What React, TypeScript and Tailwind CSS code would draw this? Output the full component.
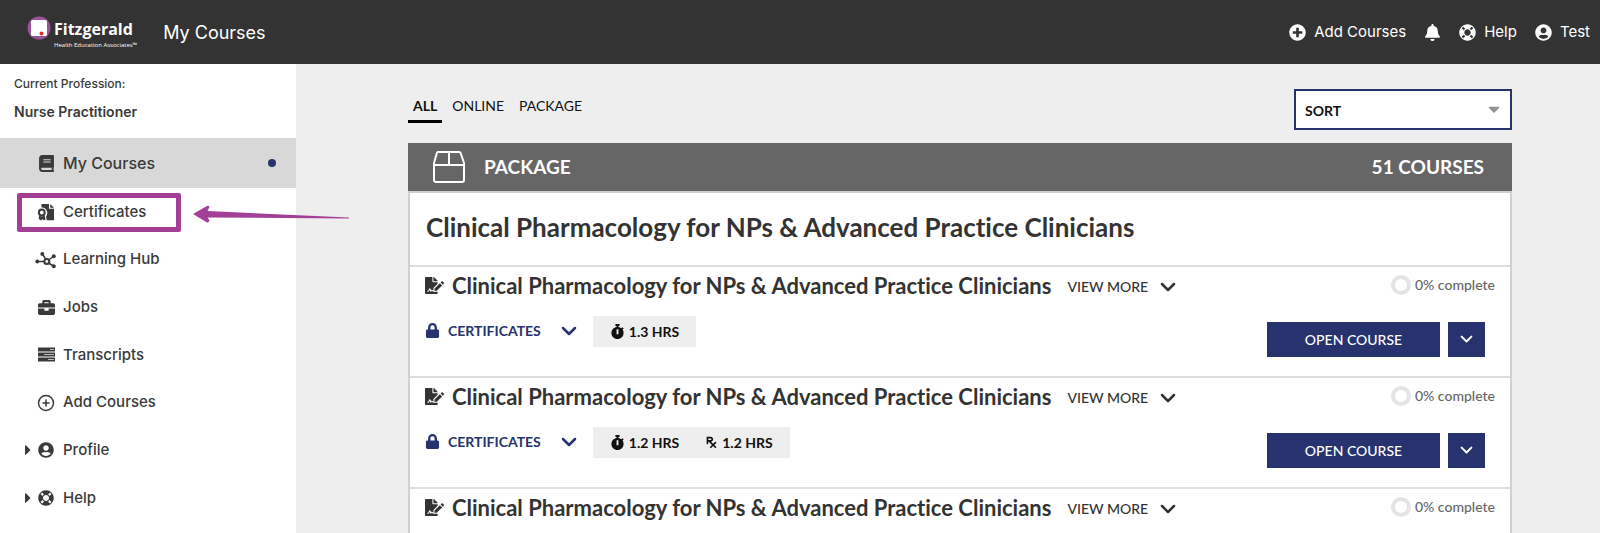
import { useState } from "react";
import type { ReactNode } from "react";
import {
  FaBell,
  FaBook,
  FaBriefcase,
  FaCaretDown,
  FaCaretRight,
  FaFileSignature,
  FaLifeRing,
  FaLock,
  FaPlusCircle,
  FaPrescription,
  FaStopwatch,
  FaUserCircle,
} from "react-icons/fa";
import { CirclePlus } from "lucide-react";

const COURSE_TITLE = "Clinical Pharmacology for NPs & Advanced Practice Clinicians";

const courses = [
  { id: 1, hours: "1.3 HRS", rx: "" },
  { id: 2, hours: "1.2 HRS", rx: "1.2 HRS" },
  { id: 3, hours: "1.2 HRS", rx: "1.2 HRS" },
];

function Chevron({ width }: { width: number }) {
  return (
    <svg
      viewBox="0 0 16 10"
      width={width}
      fill="none"
      stroke="currentColor"
      strokeWidth="2.500"
      strokeLinecap="round"
      strokeLinejoin="round"
    >
      <path d="M2 2l6 6 6-6" />
    </svg>
  );
}

function CertificateIcon() {
  return (
    <svg viewBox="0 0 18 18" className="h-[18px] w-[18px]" fill="currentColor">
      <path d="M4.500 1H12v4.800h5V17.200H9.800L9 13.500A5.400 5.400 0 0 0 4.500 4.600z" />
      <path d="M13.200 1L17 4.700h-3.800z" />
      <circle cx="4.800" cy="9.500" r="2.900" fill="none" stroke="currentColor" strokeWidth="2" />
      <path d="M2 12.800l3 .8 2.700-1.200.8 4.400-2 .4-1.200-1.200-1.300 1.500L1.800 16z" />
    </svg>
  );
}

function HubIcon() {
  return (
    <svg viewBox="0 0 22 18" className="h-[18px] w-[22px]" fill="currentColor">
      <path
        d="M3 10.500h6M7.500 3l3 5M13.500 9l5-3.500M13.500 12l5 3"
        fill="none"
        stroke="currentColor"
        strokeWidth="1.500"
      />
      <circle cx="11.800" cy="10.500" r="2.500" fill="none" stroke="currentColor" strokeWidth="2.100" />
      <circle cx="2.300" cy="10.500" r="1.900" />
      <circle cx="7.300" cy="3" r="2" />
      <circle cx="18.800" cy="5.200" r="2" />
      <circle cx="18.800" cy="15.200" r="2" />
    </svg>
  );
}

function TranscriptIcon() {
  return (
    <svg viewBox="0 0 17 15" className="h-[15px] w-[17px]">
      <path d="M0 .5h17v4H0zM0 5.500h17v4H0zM0 10.500h17v4H0z" fill="currentColor" />
      <path d="M12 2h4v1h-4zM6 7h10v1H6zM10 12h6v1h-6z" fill="#bbb" />
    </svg>
  );
}

function PackageIcon() {
  return (
    <svg
      viewBox="0 0 34 34"
      className="h-[34px] w-[34px]"
      fill="none"
      stroke="#fff"
      strokeWidth="2"
      strokeLinejoin="round"
    >
      <path d="M6 2h21a2 2 0 0 1 1.700 1.200L32 13v17a2 2 0 0 1-2 2H4a2 2 0 0 1-2-2V13L4.800 3.200A2 2 0 0 1 6 2zM2 15h30M17 2v13" />
    </svg>
  );
}

function Logo() {
  return (
    <div className="flex text-white">
      <svg viewBox="0 0 24 24" className="h-6 w-6">
        <circle cx="12" cy="12" r="11.500" fill="#9b5299" />
        <rect x="4" y="4" width="16" height="16" rx="1.500" fill="#fff" />
        <circle cx="14.500" cy="17.500" r="2" fill="#d6352f" />
      </svg>
      <div className="pt-px pl-[3px] font-['Open_Sans',sans-serif]">
        <p className="text-base leading-6 font-bold">Fitzgerald</p>
        <p className="text-[6px] leading-[8px] whitespace-nowrap">Health Education Associates™</p>
      </div>
    </div>
  );
}

function Header() {
  return (
    <header className="flex h-16 shrink-0 items-center justify-between bg-[#333] pt-px pr-[10px] pl-[27px] text-white">
      <div className="flex items-center">
        <Logo />
        <h1 className="pl-[26px] text-lg">My Courses</h1>
      </div>
      <nav className="flex items-center gap-[14px] text-[15px]">
        <a href="#add" className="flex items-center gap-2">
          <FaPlusCircle size={17} />
          Add Courses
        </a>
        <button type="button" aria-label="Notifications" className="px-1">
          <FaBell size={17} />
        </button>
        <a href="#help" className="flex items-center gap-2">
          <FaLifeRing size={17} />
          Help
        </a>
        <a href="#account" className="flex items-center gap-2 pl-1">
          <FaUserCircle size={17} />
          Test
        </a>
      </nav>
    </header>
  );
}

function NavItem({ icon, label, caret }: { icon: ReactNode; label: string; caret?: boolean }) {
  return (
    <a href={"#" + label} className="flex items-center pl-5">
      <span className="w-[14px]">{caret && <FaCaretRight size={16} />}</span>
      <span className="flex w-6 justify-center">{icon}</span>
      <span className="pl-[5px]">{label}</span>
    </a>
  );
}

function Sidebar() {
  return (
    <aside className="relative z-10 w-[296px] shrink-0 bg-white font-medium text-[#3a3a3a]">
      <div className="h-[74px] px-[14px] pt-[10px]">
        <p className="text-xs leading-5">Current Profession:</p>
        <p className="mt-2 text-sm leading-5 font-semibold">Nurse Practitioner</p>
      </div>
      <nav className="text-[15px]">
        <div className="flex h-[50px] items-center justify-between bg-[#d8d8d8] pr-5 text-base">
          <NavItem icon={<FaBook size={17} />} label="My Courses" />
          <span className="h-2 w-2 rounded-full bg-[#26336f]" />
        </div>
        <div className="grid h-[334px] auto-rows-fr">
          <div className="relative grid">
            <NavItem icon={<CertificateIcon />} label="Certificates" />
            <div className="pointer-events-none absolute top-[5px] left-[17px] h-[39px] w-[164px] rounded-xs border-5 border-[#a43f98]" />
            <svg
              viewBox="0 0 158 20"
              className="pointer-events-none absolute top-4 left-[192px] h-5 w-[158px]"
              fill="#a43f98"
            >
              <path d="M1 10L15 2q2-1 2.500 1L15.500 7 157 13.500v1L15.500 13.500l2 3q-.5 2.500-2.500 2z" />
            </svg>
          </div>
          <NavItem icon={<HubIcon />} label="Learning Hub" />
          <NavItem icon={<FaBriefcase size={17} />} label="Jobs" />
          <NavItem icon={<TranscriptIcon />} label="Transcripts" />
          <NavItem icon={<CirclePlus size={18} />} label="Add Courses" />
          <NavItem icon={<FaUserCircle size={16} />} label="Profile" caret />
          <NavItem icon={<FaLifeRing size={16} />} label="Help" caret />
        </div>
      </nav>
    </aside>
  );
}

function CourseRow({ hours, rx }: { hours: string; rx: string }) {
  return (
    <article className="flex h-[111px] justify-between border-t-2 border-[#ddd] px-[15px]">
      <div className="pt-[3px]">
        <div className="flex h-[30px] items-center">
          <FaFileSignature size={19} className="mt-px" />
          <h3 className="pl-2 text-[22px] font-bold [font-variant-ligatures:none]">{COURSE_TITLE}</h3>
          <button type="button" className="ml-4 flex items-center gap-3 pt-1 text-sm font-medium">
            VIEW MORE
            <Chevron width={16} />
          </button>
        </div>
        <div className="mt-4 flex h-[31px] items-center">
          <button type="button" className="flex items-center pb-[2px] text-sm font-bold text-[#26336f]">
            <FaLock size={15} />
            <span className="pr-5 pl-2">CERTIFICATES</span>
            <Chevron width={16} />
          </button>
          <div className="ml-4 flex h-full items-center gap-[26px] bg-[#eee] px-[17px] text-sm font-bold text-[#111]">
            <span className="flex items-center gap-1">
              <FaStopwatch size={15} />
              {hours}
            </span>
            {rx && (
              <span className="flex items-center gap-1">
                <FaPrescription size={13} />
                {rx}
              </span>
            )}
          </div>
        </div>
      </div>
      <div className="flex flex-col items-end pt-2">
        <div className="flex items-center gap-1 text-sm leading-5 font-medium text-[#666]">
          <span className="h-5 w-5 rounded-full border-4 border-[#e4e4e4]" />
          0% complete
        </div>
        <div className="mt-[27px] mr-[10px] flex gap-2 text-white">
          <button type="button" className="h-[35px] w-[173px] bg-[#26336f] text-sm font-medium">
            OPEN COURSE
          </button>
          <button
            type="button"
            aria-label="Course options"
            className="flex h-[35px] w-[37px] items-center justify-center bg-[#26336f]"
          >
            <Chevron width={13} />
          </button>
        </div>
      </div>
    </article>
  );
}

export default function App() {
  const [sort, setSort] = useState("SORT");
  const [tab, setTab] = useState("ALL");

  return (
    <div className="flex min-h-screen flex-col bg-[#eee] font-[Inter,sans-serif]">
      <Header />
      <div className="flex flex-1">
        <Sidebar />
        <main className="min-w-0 flex-1 pt-[25px] pr-[88px] pl-28 font-[Lato,sans-serif] text-[#333]">
          <div className="flex items-start justify-between">
            <div className="flex gap-[5px] text-sm text-[#111]">
              {["ALL", "ONLINE", "PACKAGE"].map((name) => (
                <button
                  key={name}
                  type="button"
                  onClick={() => setTab(name)}
                  className={
                    tab === name
                      ? "h-[34px] border-b-3 border-black px-[5px] pt-[3px] font-bold"
                      : "h-[34px] border-b-3 border-transparent px-[5px] pt-[3px]"
                  }
                >
                  {name}
                </button>
              ))}
            </div>
            <div className="relative">
              <select
                aria-label="Sort courses"
                value={sort}
                onChange={(e) => setSort(e.target.value)}
                className="h-[41px] w-[218px] appearance-none border-2 border-[#26336f] bg-white pt-[3px] pl-[9px] text-sm font-bold text-[#111]"
              >
                <option>SORT</option>
                <option>NAME</option>
                <option>DATE</option>
              </select>
              <FaCaretDown size={18} className="pointer-events-none absolute top-[11px] right-[9px] text-[#929292]" />
            </div>
          </div>

          <section className="mt-[13px]">
            <div className="flex h-12 items-center bg-[#666] pr-7 pl-6 text-[19px] font-bold text-white">
              <PackageIcon />
              <span className="pl-[18px]">PACKAGE</span>
              <span className="ml-auto">51 COURSES</span>
            </div>
            <div className="border-x-2 border-t-2 border-[#d0d0d0] bg-white">
              <h2 className="flex h-[72px] items-center pb-1 pl-4 text-[26px] font-bold [font-variant-ligatures:none]">
                {COURSE_TITLE}
              </h2>
              {courses.map((course) => (
                <CourseRow key={course.id} hours={course.hours} rx={course.rx} />
              ))}
            </div>
          </section>
        </main>
      </div>
    </div>
  );
}
